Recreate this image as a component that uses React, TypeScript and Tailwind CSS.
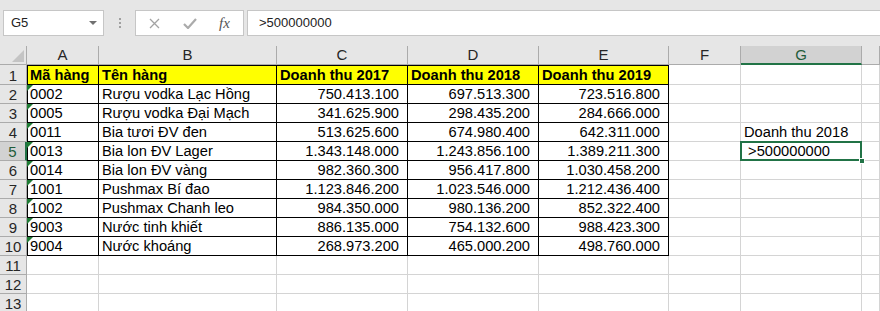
import React from "react";

type Row = [string, string, string, string, string];

const rows: Row[] = [
  ["Mã hàng", "Tên hàng", "Doanh thu 2017", "Doanh thu 2018", "Doanh thu 2019"],
  ["0002", "Rượu vodka Lạc Hồng", "750.413.100", "697.513.300", "723.516.800"],
  ["0005", "Rượu vodka Đại Mạch", "341.625.900", "298.435.200", "284.666.000"],
  ["0011", "Bia tươi ĐV đen", "513.625.600", "674.980.400", "642.311.000"],
  ["0013", "Bia lon ĐV Lager", "1.343.148.000", "1.243.856.100", "1.389.211.300"],
  ["0014", "Bia lon ĐV vàng", "982.360.300", "956.417.800", "1.030.458.200"],
  ["1001", "Pushmax Bí đao", "1.123.846.200", "1.023.546.000", "1.212.436.400"],
  ["1002", "Pushmax Chanh leo", "984.350.000", "980.136.200", "852.322.400"],
  ["9003", "Nước tinh khiết", "886.135.000", "754.132.600", "988.423.300"],
  ["9004", "Nước khoáng", "268.973.200", "465.000.200", "498.760.000"],
];

const cols = ["A", "B", "C", "D", "E", "F", "G", ""];
const grid =
  "grid grid-cols-[27px_72px_178px_131px_131px_130px_72px_121px_1fr]";
const font = "font-['Liberation_Sans',Arial,sans-serif]";

function ErrorMark() {
  return (
    <svg className="absolute left-0 top-0" width="6" height="6" viewBox="0 0 6 6">
      <polygon points="0,0 6,0 0,6" fill="#1e7b34" />
    </svg>
  );
}

function FormulaBar() {
  return (
    <div className="flex h-[46px] items-start bg-[#e6e6e6] pl-[3px] pt-[10px]">
      <div className="relative flex h-[26px] w-[101px] items-center border border-[#c6c6c6] bg-white pl-[7px] text-[13px] text-[#222]">
        G5
        <svg className="absolute right-[6px] top-[10px]" width="8" height="4" viewBox="0 0 8 4">
          <polygon points="0,0 8,0 4,4" fill="#707070" />
        </svg>
      </div>
      <div className="flex h-[26px] w-[31px] flex-col items-center justify-center gap-[2px]">
        <span className="h-[2px] w-[2px] bg-[#a0a0a0]" />
        <span className="h-[2px] w-[2px] bg-[#a0a0a0]" />
        <span className="h-[2px] w-[2px] bg-[#a0a0a0]" />
      </div>
      <div className="flex h-[26px] w-[109px] items-center border border-[#c6c6c6] bg-white">
        <svg className="ml-[13px]" width="11" height="11" viewBox="0 0 11 11">
          <path d="M1 1 L10 10 M10 1 L1 10" stroke="#a3a3a3" strokeWidth="1.3" fill="none" />
        </svg>
        <svg className="ml-[23px]" width="14" height="11" viewBox="0 0 14 11">
          <path d="M1 6 L5 10 L13 1" stroke="#ababab" strokeWidth="2.2" fill="none" />
        </svg>
        <span className="ml-[22px] font-['Liberation_Serif',serif] text-[15px] italic leading-none text-[#555]">
          fx
        </span>
      </div>
      <div className="ml-[3px] flex h-[26px] flex-1 items-center border border-r-0 border-[#c6c6c6] bg-white pl-[11px] text-[13px] text-[#222]">
        &gt;500000000
      </div>
    </div>
  );
}

function HeaderRow() {
  return (
    <div className={`${grid} h-[19px]`}>
      <div className="relative border-b border-r border-[#ababab] bg-[#e6e6e6]">
        <svg className="absolute bottom-[2px] right-[2px]" width="12" height="12" viewBox="0 0 12 12">
          <polygon points="12,0 12,12 0,12" fill="#c4c4c4" />
        </svg>
      </div>
      {cols.map((c, i) => {
        const sel = c === "G";
        return (
          <div
            key={i}
            className={
              sel
                ? "flex items-end justify-center border-b-2 border-r border-b-[#217346] border-r-[#ababab] bg-[#d2d2d2] text-[15px] leading-[17px] text-[#1f5c3a]"
                : "flex items-end justify-center border-b border-r border-[#ababab] bg-[#e6e6e6] pb-[1px] text-[15px] leading-[17px] text-[#262626]"
            }
          >
            {c}
          </div>
        );
      })}
    </div>
  );
}

function RowHead({ n }: { n: number }) {
  const sel = n === 5;
  return (
    <div
      className={
        sel
          ? "flex items-end justify-center border-b border-r-2 border-b-[#ababab] border-r-[#217346] bg-[#d2d2d2] text-[15px] leading-[17px] text-[#1f5c3a]"
          : "flex items-end justify-center border-b border-r border-[#ababab] bg-[#e6e6e6] text-[15px] leading-[17px] text-[#262626]"
      }
    >
      {n}
    </div>
  );
}

function DataRow({ n, row }: { n: number; row?: Row }) {
  const head = n === 1;
  const h = head ? "h-[20px]" : "h-[19px]";
  const blank = "border-b border-r border-[#d4d4d4]";
  return (
    <div className={`${grid} ${h}`}>
      <RowHead n={n} />
      {row ? (
        row.map((v, i) => {
          const numeric = !head && i >= 2;
          const edge =
            i === 0
              ? head
                ? "shadow-[inset_1px_1px_0_#000]"
                : "shadow-[inset_1px_0_0_#000]"
              : head
              ? "shadow-[inset_0_1px_0_#000]"
              : "";
          return (
            <div
              key={i}
              className={`relative flex items-end overflow-visible whitespace-nowrap border-b border-r border-black text-[14.67px] leading-[17px] text-black ${edge} ${
                head ? "bg-[#ffff00] pl-[3px] font-bold" : ""
              } ${numeric ? "justify-end pr-[8px]" : "pl-[3px]"}`}
            >
              {i === 0 && !head && <ErrorMark />}
              {v}
            </div>
          );
        })
      ) : (
        <>
          <div className={blank} />
          <div className={blank} />
          <div className={blank} />
          <div className={blank} />
          <div className={blank} />
        </>
      )}
      <div className={blank} />
      {n === 4 ? (
        <div className={`${blank} flex items-end whitespace-nowrap pl-[3px] text-[14.67px] leading-[17px] text-black`}>
          Doanh thu 2018
        </div>
      ) : n === 5 ? (
        <div className={`${blank} relative flex items-end whitespace-pre pl-[3px] text-[14.67px] leading-[17px] text-black`}>
          {" >500000000"}
          <div className="pointer-events-none absolute -left-px -top-px bottom-[-1px] right-[-1px] border-2 border-[#217346]" />
          <div className="absolute bottom-[-4px] right-[-4px] h-[6px] w-[6px] border border-white bg-[#217346]" />
        </div>
      ) : (
        <div className={blank} />
      )}
      <div className={blank} />
    </div>
  );
}

export default function App() {
  const all = Array.from({ length: 13 }, (_, i) => i + 1);
  return (
    <div className={`h-[311px] w-[880px] overflow-hidden bg-white ${font}`}>
      <FormulaBar />
      <HeaderRow />
      {all.map((n) => (
        <DataRow key={n} n={n} row={rows[n - 1]} />
      ))}
    </div>
  );
}
